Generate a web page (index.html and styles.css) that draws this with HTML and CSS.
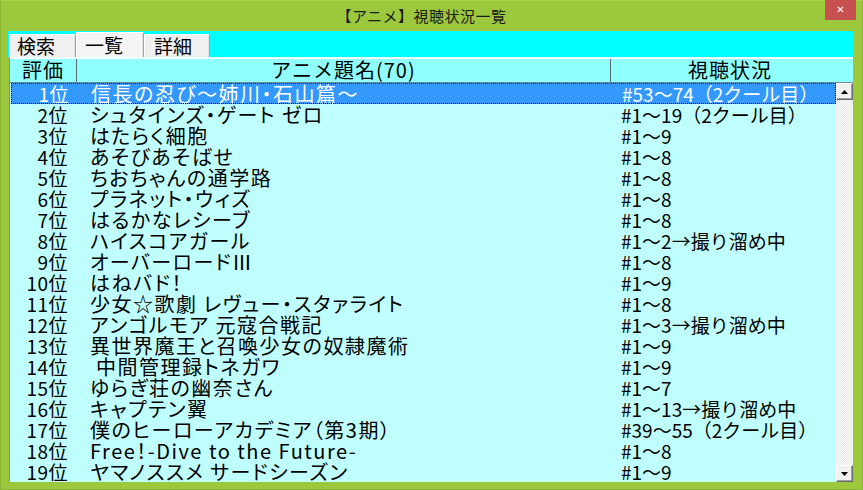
FILE: index.html
```html
<!DOCTYPE html>
<html lang="ja">
<head>
<meta charset="utf-8">
<title>【アニメ】視聴状況一覧</title>
<link rel="stylesheet" href="styles.css">
</head>
<body>
<div class="window">
  <div class="titlebar">
    <div class="title-spacer"></div>
    <div class="title">【アニメ】視聴状況一覧</div>
    <div class="title-controls"><div class="close">✕</div></div>
  </div>
  <div class="client">
    <div class="tabstrip">
      <div class="tab">検索</div>
      <div class="tab selected">一覧</div>
      <div class="tab">詳細</div>
    </div>
    <div class="listview">
      <div class="lv-header">
        <div class="hcell">評価</div>
        <div class="hcell">アニメ題名(70)</div>
        <div class="hcell last">視聴状況</div>
      </div>
      <div class="lv-body">
        <div class="rows">
          <div class="row selected"><span class="c1">1位</span><span class="c2">信長の忍び～姉川・石山篇～</span><span class="c3">#53～74（2クール目）</span></div>
          <div class="row"><span class="c1">2位</span><span class="c2">シュタインズ・ゲート ゼロ</span><span class="c3">#1～19（2クール目）</span></div>
          <div class="row"><span class="c1">3位</span><span class="c2">はたらく細胞</span><span class="c3">#1～9</span></div>
          <div class="row"><span class="c1">4位</span><span class="c2">あそびあそばせ</span><span class="c3">#1～8</span></div>
          <div class="row"><span class="c1">5位</span><span class="c2">ちおちゃんの通学路</span><span class="c3">#1～8</span></div>
          <div class="row"><span class="c1">6位</span><span class="c2">プラネット・ウィズ</span><span class="c3">#1～8</span></div>
          <div class="row"><span class="c1">7位</span><span class="c2">はるかなレシーブ</span><span class="c3">#1～8</span></div>
          <div class="row"><span class="c1">8位</span><span class="c2">ハイスコアガール</span><span class="c3">#1～2→撮り溜め中</span></div>
          <div class="row"><span class="c1">9位</span><span class="c2">オーバーロードⅢ</span><span class="c3">#1～8</span></div>
          <div class="row"><span class="c1">10位</span><span class="c2">はねバド！</span><span class="c3">#1～9</span></div>
          <div class="row"><span class="c1">11位</span><span class="c2">少女☆歌劇 レヴュー・スタァライト</span><span class="c3">#1～8</span></div>
          <div class="row"><span class="c1">12位</span><span class="c2">アンゴルモア 元寇合戦記</span><span class="c3">#1～3→撮り溜め中</span></div>
          <div class="row"><span class="c1">13位</span><span class="c2">異世界魔王と召喚少女の奴隷魔術</span><span class="c3">#1～9</span></div>
          <div class="row"><span class="c1">14位</span><span class="c2"> 中間管理録トネガワ</span><span class="c3">#1～9</span></div>
          <div class="row"><span class="c1">15位</span><span class="c2">ゆらぎ荘の幽奈さん</span><span class="c3">#1～7</span></div>
          <div class="row"><span class="c1">16位</span><span class="c2">キャプテン翼</span><span class="c3">#1～13→撮り溜め中</span></div>
          <div class="row"><span class="c1">17位</span><span class="c2">僕のヒーローアカデミア（第3期）</span><span class="c3">#39～55（2クール目）</span></div>
          <div class="row"><span class="c1">18位</span><span class="c2">Free！-Dive to the Future-</span><span class="c3">#1～8</span></div>
          <div class="row"><span class="c1">19位</span><span class="c2">ヤマノススメ サードシーズン</span><span class="c3">#1～9</span></div>
        </div>
        <div class="scrollbar">
          <div class="sb-btn"><svg width="7" height="4" viewBox="0 0 7 4"><polygon points="3.5,0 7,4 0,4" fill="#000"/></svg></div>
          <div class="sb-track"></div>
          <div class="sb-btn"><svg width="7" height="4" viewBox="0 0 7 4"><polygon points="0,0 7,0 3.5,4" fill="#000"/></svg></div>
        </div>
      </div>
    </div>
  </div>
</div>
</body>
</html>
```
FILE: styles.css
```css
html, body {
  margin: 0;
  padding: 0;
}
body {
  width: 863px;
  height: 490px;
  overflow: hidden;
  background: #9bc83d;
  font-family: "Noto Sans CJK JP", "Noto Sans", sans-serif;
}
.window {
  width: 863px;
  height: 490px;
  box-sizing: border-box;
  border: 1px solid #8ab534;
  border-top-color: #a6d24a;
  display: flex;
  flex-direction: column;
}
.titlebar {
  height: 30px;
  display: grid;
  grid-template-columns: 1fr auto 1fr;
  align-items: center;
}
.title {
  font-size: 15px;
  letter-spacing: 0.5px;
  color: #1a1a1a;
  line-height: 30px;
  padding-right: 20px;
}
.title-controls {
  align-self: start;
  display: flex;
  justify-content: flex-end;
  padding-right: 6px;
}
.close {
  width: 31px;
  height: 20px;
  margin-top: -1px;
  background: #c75050;
  color: #fff;
  font-family: "DejaVu Sans", sans-serif;
  font-size: 10px;
  font-weight: bold;
  line-height: 20px;
  text-align: center;
}
.client {
  margin: 0 9px 7px 7px;
  height: 451px;
  display: flex;
  flex-direction: column;
}
.tabstrip {
  height: 26px;
  background: #00ffff;
  display: flex;
  align-items: flex-end;
  padding-left: 1px;
}
.tab {
  height: 23px;
  box-sizing: border-box;
  background: #f0f0f0;
  border-top: 1px solid #ffffff;
  border-left: 1px solid #ffffff;
  border-right: 1px solid #a0a0a0;
  box-shadow: inset -1px 0 0 #e3e3e3;
  font-size: 19px;
  line-height: 22px;
  color: #000;
  padding-left: 7px;
}
.tab:nth-child(1) { width: 67px; }
.tab.selected {
  width: 68px;
  height: 25px;
  background: #f4f4f4;
  padding-left: 8px;
  line-height: 23px;
}
.tab:nth-child(3) { width: 66px; padding-left: 9px; }
.listview {
  flex: 1;
  display: flex;
  flex-direction: column;
  border-left: 1px solid #8a8a8a;
  border-top: 1px solid #e8ffff;
  margin-left: 1px;
  min-height: 0;
}
.lv-header {
  height: 23px;
  display: grid;
  grid-template-columns: 67px 534px 1fr;
  background: #90ffff;
  border-bottom: 1px solid #6f8f8f;
  border-top: 1px solid #ffffff;
}
.hcell {
  font-size: 20px;
  letter-spacing: 1px;
  line-height: 22px;
  text-align: center;
  color: #000;
  border-right: 1px solid #5a6b6b;
  overflow: hidden;
  white-space: nowrap;
}
.hcell.last {
  border-right: none;
  padding-right: 4px;
}
.lv-body {
  flex: 1;
  display: flex;
  min-height: 0;
  background: #c0ffff;
}
.rows {
  width: 826px;
  overflow: hidden;
}
.row {
  height: 21px;
  display: grid;
  grid-template-columns: 67px 534px 1fr;
  font-size: 19px;
  line-height: 21px;
  color: #000;
  white-space: pre;
}
.row.selected {
  background: #3399ff;
  color: #ffffff;
  outline: 1px dotted #000;
  outline-offset: -1px;
  margin-left: 1px;
}
.c1 {
  text-align: right;
  padding-right: 9px;
  letter-spacing: 0.5px;
}
.c2 {
  padding-left: 13px;
  overflow: hidden;
  font-size: 20px;
  letter-spacing: 1.5px;
  font-feature-settings: "palt" 1;
}
.c3 {
  padding-left: 10px;
  overflow: hidden;
}
.scrollbar {
  width: 17px;
  display: flex;
  flex-direction: column;
}
.sb-btn {
  height: 17px;
  box-sizing: border-box;
  background: #f0f0f0;
  border-top: 1px solid #ffffff;
  border-left: 1px solid #ffffff;
  border-right: 1px solid #696969;
  border-bottom: 1px solid #696969;
  box-shadow: inset -1px -1px 0 #a0a0a0;
  display: flex;
  align-items: center;
  justify-content: center;
}
.sb-track {
  flex: 1;
  background-color: #ffffff;
  background-image: repeating-conic-gradient(#e6e6e6 0 25%, #ffffff 0 50%);
  background-size: 2px 2px;
}
```
